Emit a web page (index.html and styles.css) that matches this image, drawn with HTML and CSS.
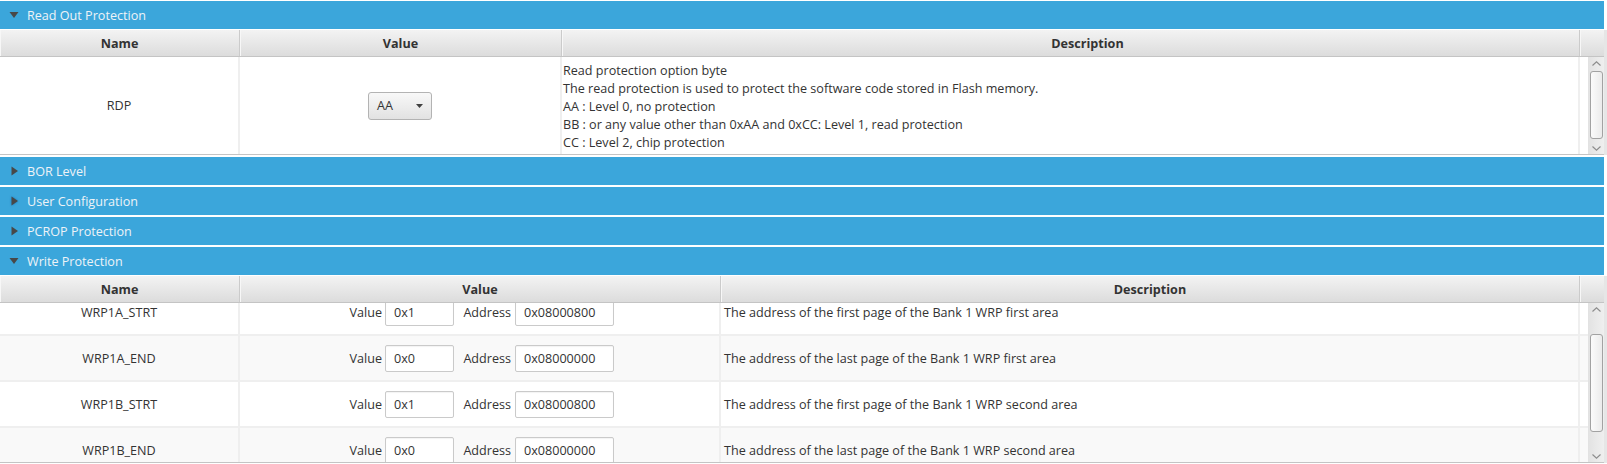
FILE: index.html
```html
<!DOCTYPE html>
<html>
<head>
<meta charset="utf-8">
<title>Option Bytes</title>
<link rel="stylesheet" href="styles.css">
</head>
<body>
<div class="app">
  <section class="pane">
    <div class="pane-title"><svg class="caret" viewBox="0 0 10 10"><polygon points="0.5,2 9.5,2 5,8"/></svg><span>Read Out Protection</span></div>
    <div class="table rdp-table">
      <div class="thead">
        <div class="th">Name</div>
        <div class="th">Value</div>
        <div class="th th-desc">Description</div>
        <div class="th th-filler"></div>
      </div>
      <div class="tbody">
        <div class="viewport">
          <div class="row rdp-row">
            <div class="td td-name">RDP</div>
            <div class="td td-center">
              <div class="combo"><span>AA</span><svg class="combo-arrow" viewBox="0 0 7 4"><polygon points="0,0 7,0 3.5,4"/></svg></div>
            </div>
            <div class="td td-desc rdp-desc">
              <div class="desc-lines">Read protection option byte<br>The read protection is used to protect the software code stored in Flash memory.<br>AA : Level 0, no protection<br>BB : or any value other than 0xAA and 0xCC: Level 1, read protection<br>CC : Level 2, chip protection</div>
            </div>
            <div class="td td-end"></div>
          </div>
        </div>
        <div class="vscroll rdp-scroll">
          <div class="sbtn"><svg viewBox="0 0 9 5"><polyline points="0.5,4.5 4.5,0.8 8.5,4.5"/></svg></div>
          <div class="track"><div class="thumb"></div></div>
          <div class="sbtn"><svg viewBox="0 0 9 5"><polyline points="0.5,0.5 4.5,4.2 8.5,0.5"/></svg></div>
        </div>
      </div>
    </div>
  </section>

  <section class="pane">
    <div class="pane-title"><svg class="caret" viewBox="0 0 10 10"><polygon points="2.5,0.5 9,5 2.5,9.5"/></svg><span>BOR Level</span></div>
  </section>
  <section class="pane">
    <div class="pane-title"><svg class="caret focused" viewBox="0 0 10 10"><polygon points="2.5,0.5 9,5 2.5,9.5"/></svg><span>User Configuration</span></div>
  </section>
  <section class="pane">
    <div class="pane-title"><svg class="caret" viewBox="0 0 10 10"><polygon points="2.5,0.5 9,5 2.5,9.5"/></svg><span>PCROP Protection</span></div>
  </section>

  <section class="pane">
    <div class="pane-title"><svg class="caret" viewBox="0 0 10 10"><polygon points="0.5,2 9.5,2 5,8"/></svg><span>Write Protection</span></div>
    <div class="table wrp-table">
      <div class="thead">
        <div class="th">Name</div>
        <div class="th">Value</div>
        <div class="th">Description</div>
        <div class="th th-filler"></div>
      </div>
      <div class="tbody">
        <div class="viewport">
          <div class="rows">
            <div class="row wrp-row">
              <div class="td td-name">WRP1A_STRT</div>
              <div class="td td-fields">
                <span class="lbl lbl-value">Value</span><div class="field f-small">0x1</div>
                <span class="lbl lbl-addr">Address</span><div class="field f-wide">0x08000800</div>
              </div>
              <div class="td td-desc wrp-desc">The address of the first page of the Bank 1 WRP first area</div>
              <div class="td td-end"></div>
            </div>
            <div class="row wrp-row odd">
              <div class="td td-name">WRP1A_END</div>
              <div class="td td-fields">
                <span class="lbl lbl-value">Value</span><div class="field f-small">0x0</div>
                <span class="lbl lbl-addr">Address</span><div class="field f-wide">0x08000000</div>
              </div>
              <div class="td td-desc wrp-desc">The address of the last page of the Bank 1 WRP first area</div>
              <div class="td td-end"></div>
            </div>
            <div class="row wrp-row">
              <div class="td td-name">WRP1B_STRT</div>
              <div class="td td-fields">
                <span class="lbl lbl-value">Value</span><div class="field f-small">0x1</div>
                <span class="lbl lbl-addr">Address</span><div class="field f-wide">0x08000800</div>
              </div>
              <div class="td td-desc wrp-desc">The address of the first page of the Bank 1 WRP second area</div>
              <div class="td td-end"></div>
            </div>
            <div class="row wrp-row odd">
              <div class="td td-name">WRP1B_END</div>
              <div class="td td-fields">
                <span class="lbl lbl-value">Value</span><div class="field f-small">0x0</div>
                <span class="lbl lbl-addr">Address</span><div class="field f-wide">0x08000000</div>
              </div>
              <div class="td td-desc wrp-desc">The address of the last page of the Bank 1 WRP second area</div>
              <div class="td td-end"></div>
            </div>
          </div>
        </div>
        <div class="vscroll wrp-scroll">
          <div class="sbtn"><svg viewBox="0 0 9 5"><polyline points="0.5,4.5 4.5,0.8 8.5,4.5"/></svg></div>
          <div class="track"><div class="thumb"></div></div>
          <div class="sbtn"><svg viewBox="0 0 9 5"><polyline points="0.5,0.5 4.5,4.2 8.5,0.5"/></svg></div>
        </div>
      </div>
    </div>
  </section>
</div>
</body>
</html>
```
FILE: styles.css
```css
* { box-sizing: border-box; }

html, body {
  margin: 0;
  padding: 0;
  background: #ffffff;
}

body {
  width: 1607px;
  height: 464px;
  overflow: hidden;
  font-family: "Open Sans", "Noto Sans", sans-serif;
  font-size: 12.6px;
  color: #333333;
}

.app {
  padding-top: 1px;
  display: flex;
  flex-direction: column;
  gap: 2px;
}

.pane {
  display: flex;
  flex-direction: column;
  gap: 1px;
}

.pane-title {
  width: 1604px;
  height: 28px;
  background: #3ba6db;
  color: #eef3f7;
  font-size: 12.6px;
  display: flex;
  align-items: center;
  padding-left: 9px;
}

.caret {
  width: 10px;
  height: 10px;
  margin-right: 8px;
  fill: #484848;
  flex: none;
}

.caret.focused {
  filter: drop-shadow(0 0 1px #1a78b8);
}

/* tables */
.table {
  width: 1607px;
  display: flex;
  flex-direction: column;
  border-right: 3px solid #e6e6e6;
}

.thead {
  display: grid;
  height: 27px;
  background: linear-gradient(#f3f3f3, #dcdcdc);
  border-bottom: 1px solid #c4c4c4;
}

.rdp-table .thead { grid-template-columns: 240px 322px 1018px 24px; }
.wrp-table .thead { grid-template-columns: 240px 481px 859px 24px; }

.th {
  display: flex;
  align-items: center;
  justify-content: center;
  font-weight: bold;
  color: #333333;
  border-right: 1px solid #cbcbcb;
  box-shadow: inset 1px 0 0 #f7f7f7;
}

.th-desc { padding-left: 34px; }
.th-filler { border-right: none; }

.tbody {
  display: flex;
  border-bottom: 1px solid #c4c4c4;
  background: #ffffff;
}

.rdp-table .tbody { height: 98px; }
.wrp-table .tbody { height: 160px; }

.viewport {
  width: 1588px;
  overflow: hidden;
}

.rows {
  margin-top: -13px;
}

.row {
  display: grid;
}

.rdp-row {
  grid-template-columns: 240px 322px 1018px 8px;
  height: 97px;
}

.wrp-row {
  grid-template-columns: 240px 481px 859px 8px;
  height: 46px;
  border-bottom: 2px solid #efefef;
  background: #ffffff;
}

.wrp-row.odd { background: #f9f9f9; }

.td {
  display: flex;
  align-items: center;
  border-right: 2px solid #efefef;
  white-space: nowrap;
}

.td-end { border-right: none; }
.td-name, .td-center { justify-content: center; }

.rdp-desc { padding-left: 1px; padding-top: 3px; }
.wrp-desc { padding-left: 3px; }

.desc-lines { line-height: 18px; }

/* combo box */
.combo {
  width: 64px;
  height: 28px;
  border: 1px solid #b3b3b3;
  border-radius: 3px;
  background: linear-gradient(#f8f8f8, #e2e2e2);
  display: flex;
  align-items: center;
  padding-left: 8px;
  padding-right: 8px;
}

.combo-arrow {
  width: 7px;
  height: 4px;
  margin-left: auto;
  fill: #404040;
}

/* write protection fields */
.td-fields {
  padding-left: 100px;
}

.lbl {
  text-align: right;
  flex: none;
}

.lbl-value { width: 42px; margin-right: 3px; }
.lbl-addr { width: 57px; margin-right: 4px; }

.field {
  height: 27px;
  border: 1px solid #cacaca;
  border-radius: 2px;
  background: #ffffff;
  box-shadow: inset 0 1px 1px rgba(0, 0, 0, 0.05);
  display: flex;
  align-items: center;
  padding-left: 8px;
  flex: none;
}

.f-small { width: 69px; }
.f-wide { width: 99px; }

/* vertical scrollbar */
.vscroll {
  width: 16px;
  display: flex;
  flex-direction: column;
  align-items: center;
  background: linear-gradient(90deg, #e3e3e3, #efefef);
  border-left: 1px solid #e2e2e2;
}

.sbtn {
  height: 12px;
  width: 100%;
  display: flex;
  align-items: center;
  justify-content: center;
  flex: none;
}

.sbtn svg {
  width: 9px;
  height: 5px;
  fill: none;
  stroke: #8c8c8c;
  stroke-width: 1.1;
}

.track {
  flex: 1;
  width: 100%;
  display: flex;
  flex-direction: column;
  align-items: center;
}

.thumb {
  width: 13px;
  border: 1px solid #a2a2a2;
  border-radius: 3px;
  background: linear-gradient(90deg, #fbfbfb, #ebebeb);
}

.rdp-scroll .thumb { margin-top: 2px; height: 68px; }
.wrp-scroll .thumb { margin-top: 19px; height: 98px; }
```
